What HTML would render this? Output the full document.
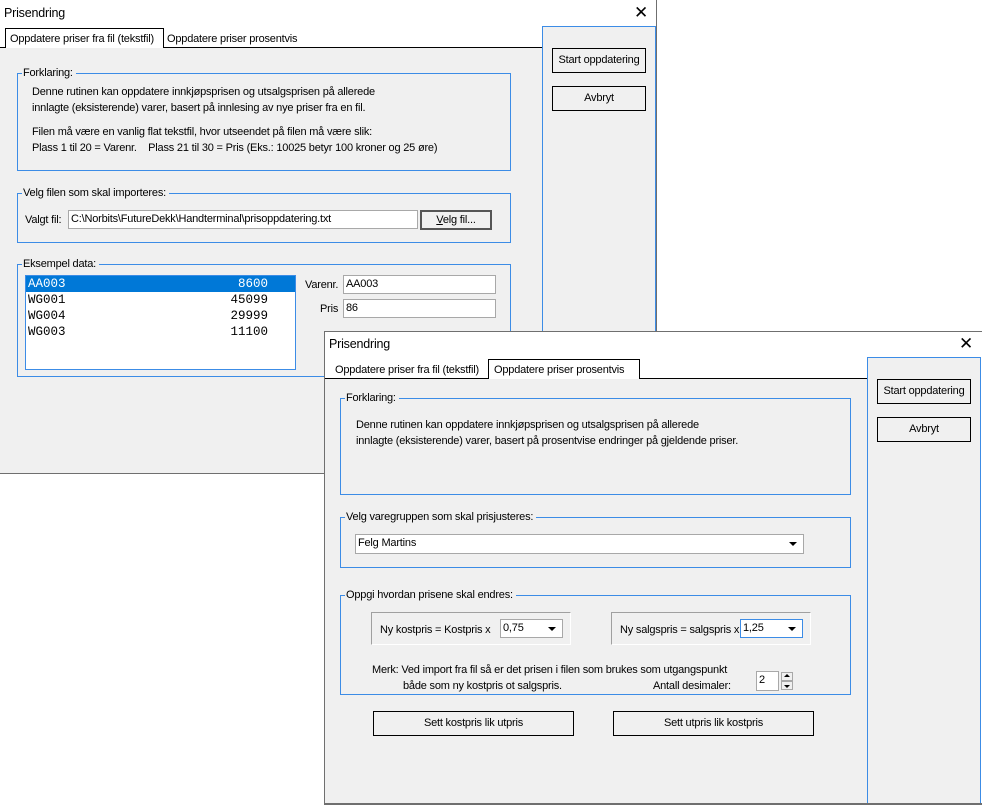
<!DOCTYPE html>
<html><head><meta charset="utf-8"><style>
*{box-sizing:border-box;margin:0;padding:0}
body{width:982px;height:805px;background:#fff;position:relative;overflow:hidden;font-family:"Liberation Sans",Arial,sans-serif;font-size:11px;letter-spacing:-0.2px;color:#000}
.a{position:absolute}
.bg{position:absolute;background:#f0f0f0}
.grp{position:absolute;border:1px solid #3c8ce6}
.lg{position:absolute;top:-8px;left:4px;background:#f0f0f0;padding:0 3px 0 1px;line-height:14px;white-space:nowrap}
.btn{position:absolute;border:1px solid #000;background:#f0f0f0;text-align:center;line-height:22px;white-space:nowrap}
.inp{position:absolute;background:#fff;border:1px solid #a8a8a8;line-height:16px;padding-left:2px;white-space:nowrap}
.t{position:absolute;white-space:nowrap;line-height:14px}
.tab{position:absolute;line-height:18px;white-space:nowrap}
.x{position:absolute;font-size:17px;line-height:18px;letter-spacing:0;font-weight:300}
.arr{position:absolute;width:0;height:0;border-left:4px solid transparent;border-right:4px solid transparent;border-top:4px solid #000}
.mono{font-family:"Liberation Mono",monospace;font-size:12.5px;letter-spacing:0}
.ln{position:absolute;background:#6f6f6f}
</style></head><body>

<!-- Window 1 -->
<div class="t" style="left:4px;top:6px;font-size:12.5px">Prisendring</div>
<div class="x" style="left:634px;top:4px">✕</div>
<div class="a" style="left:0;top:47px;width:542px;height:1px;background:#000"></div>
<div class="a" style="left:5px;top:28px;width:159px;height:20px;border:1px solid #000;border-bottom:none;background:#fff"></div>
<div class="tab" style="left:10px;top:30px">Oppdatere priser fra fil (tekstfil)</div>
<div class="tab" style="left:167px;top:30px">Oppdatere priser prosentvis</div>
<div class="bg" style="left:0;top:48px;width:542px;height:425px"></div>
<div class="bg" style="left:542px;top:26px;width:114px;height:310px;border:1px solid #3c8ce6"></div>
<div class="ln" style="left:656px;top:0;width:1px;height:474px"></div>
<div class="ln" style="left:0;top:473px;width:657px;height:1px"></div>
<div class="btn" style="left:552px;top:48px;width:94px;height:25px">Start oppdatering</div>
<div class="btn" style="left:552px;top:86px;width:94px;height:25px">Avbryt</div>

<div class="grp" style="left:17px;top:73px;width:494px;height:98px"><span class="lg">Forklaring:</span></div>
<div class="t" style="left:32px;top:85px">Denne rutinen kan oppdatere innkjøpsprisen og utsalgsprisen på allerede</div>
<div class="t" style="left:32px;top:101px">innlagte (eksisterende) varer, basert på innlesing av nye priser fra en fil.</div>
<div class="t" style="left:32px;top:125px">Filen må være en vanlig flat tekstfil, hvor utseendet på filen må være slik:</div>
<div class="t" style="left:32px;top:141px">Plass 1 til 20 = Varenr.&nbsp;&nbsp;&nbsp; Plass 21 til 30 = Pris (Eks.: 10025 betyr 100 kroner og 25 øre)</div>

<div class="grp" style="left:17px;top:193px;width:494px;height:50px"><span class="lg">Velg filen som skal importeres:</span></div>
<div class="t" style="left:25px;top:213px">Valgt fil:</div>
<div class="inp" style="left:68px;top:210px;width:350px;height:19px">C:\Norbits\FutureDekk\Handterminal\prisoppdatering.txt</div>
<div class="btn" style="left:420px;top:210px;width:72px;height:20px;line-height:17px;border:2px solid #555"><u>V</u>elg fil...</div>

<div class="grp" style="left:17px;top:264px;width:494px;height:113px"><span class="lg">Eksempel data:</span></div>
<div class="a" style="left:25px;top:275px;width:271px;height:95px;background:#fff;border:1px solid #3c8ce6"></div>
<div class="a" style="left:26px;top:276px;width:269px;height:16px;background:#0078d7"></div>
<div class="t mono" style="left:28px;top:277px;color:#fff">AA003</div><div class="t mono" style="left:210px;top:277px;width:58px;text-align:right;color:#fff">8600</div>
<div class="t mono" style="left:28px;top:293px">WG001</div><div class="t mono" style="left:210px;top:293px;width:58px;text-align:right">45099</div>
<div class="t mono" style="left:28px;top:309px">WG004</div><div class="t mono" style="left:210px;top:309px;width:58px;text-align:right">29999</div>
<div class="t mono" style="left:28px;top:325px">WG003</div><div class="t mono" style="left:210px;top:325px;width:58px;text-align:right">11100</div>
<div class="t" style="left:305px;top:278px">Varenr.</div>
<div class="inp" style="left:343px;top:275px;width:153px;height:19px">AA003</div>
<div class="t" style="left:320px;top:302px">Pris</div>
<div class="inp" style="left:343px;top:299px;width:153px;height:19px">86</div>

<!-- Window 2 -->
<div class="a" style="left:325px;top:331px;width:657px;height:474px;background:#fff"></div>
<div class="ln" style="left:324px;top:331px;width:658px;height:1px"></div>
<div class="ln" style="left:324px;top:331px;width:1px;height:474px"></div>
<div class="t" style="left:329px;top:337px;font-size:12.5px">Prisendring</div>
<div class="x" style="left:959px;top:335px">✕</div>
<div class="a" style="left:325px;top:378px;width:542px;height:1px;background:#000"></div>
<div class="a" style="left:488px;top:359px;width:152px;height:20px;border:1px solid #000;border-bottom:none;background:#fff"></div>
<div class="tab" style="left:335px;top:361px">Oppdatere priser fra fil (tekstfil)</div>
<div class="tab" style="left:494px;top:361px">Oppdatere priser prosentvis</div>
<div class="bg" style="left:325px;top:379px;width:542px;height:424px"></div>
<div class="bg" style="left:867px;top:357px;width:114px;height:446px;border:1px solid #3c8ce6;border-bottom:none"></div>
<div class="ln" style="left:325px;top:803px;width:657px;height:2px"></div>
<div class="btn" style="left:877px;top:379px;width:94px;height:25px">Start oppdatering</div>
<div class="btn" style="left:877px;top:417px;width:94px;height:25px">Avbryt</div>

<div class="grp" style="left:340px;top:398px;width:511px;height:97px"><span class="lg">Forklaring:</span></div>
<div class="t" style="left:356px;top:418px">Denne rutinen kan oppdatere innkjøpsprisen og utsalgsprisen på allerede</div>
<div class="t" style="left:356px;top:434px">innlagte (eksisterende) varer, basert på prosentvise endringer på gjeldende priser.</div>

<div class="grp" style="left:340px;top:517px;width:511px;height:51px"><span class="lg">Velg varegruppen som skal prisjusteres:</span></div>
<div class="inp" style="left:355px;top:534px;width:449px;height:20px">Felg Martins</div>
<div class="arr" style="left:789px;top:542px"></div>

<div class="grp" style="left:340px;top:595px;width:511px;height:100px"><span class="lg">Oppgi hvordan prisene skal endres:</span></div>
<div class="a" style="left:371px;top:612px;width:200px;height:33px;border:1px solid #a0a0a0;border-right-color:#fff;border-bottom-color:#fff"></div>
<div class="t" style="left:380px;top:623px">Ny kostpris = Kostpris x</div>
<div class="inp" style="left:500px;top:619px;width:63px;height:19px">0,75</div>
<div class="arr" style="left:548px;top:627px"></div>
<div class="a" style="left:611px;top:612px;width:200px;height:33px;border:1px solid #a0a0a0;border-right-color:#fff;border-bottom-color:#fff"></div>
<div class="t" style="left:620px;top:623px">Ny salgspris = salgspris x</div>
<div class="inp" style="left:740px;top:619px;width:63px;height:19px;border-color:#3c8ce6">1,25</div>
<div class="arr" style="left:788px;top:627px"></div>
<div class="t" style="left:372px;top:663px">Merk: Ved import fra fil så er det prisen i filen som brukes som utgangspunkt</div>
<div class="t" style="left:403px;top:679px">både som ny kostpris ot salgspris.</div>
<div class="t" style="left:653px;top:679px">Antall desimaler:</div>
<div class="inp" style="left:756px;top:671px;width:23px;height:20px">2</div>
<div class="a" style="left:781px;top:672px;width:12px;height:9px;border:1px solid #a8a8a8;background:#f0f0f0"></div>
<div class="a" style="left:781px;top:681px;width:12px;height:9px;border:1px solid #a8a8a8;background:#f0f0f0"></div>
<div class="a" style="left:784px;top:674px;border-left:3px solid transparent;border-right:3px solid transparent;border-bottom:3px solid #000"></div>
<div class="a" style="left:784px;top:685px;border-left:3px solid transparent;border-right:3px solid transparent;border-top:3px solid #000"></div>

<div class="btn" style="left:373px;top:711px;width:201px;height:25px">Sett kostpris lik utpris</div>
<div class="btn" style="left:613px;top:711px;width:201px;height:25px">Sett utpris lik kostpris</div>
</body></html>
